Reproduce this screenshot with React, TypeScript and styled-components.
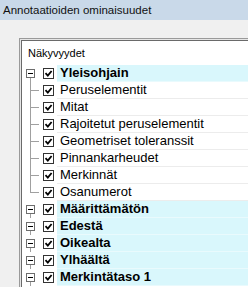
import styled, { createGlobalStyle } from "styled-components";

const GlobalStyle = createGlobalStyle`
  html, body {
    margin: 0;
    padding: 0;
    background: #f0f0f0;
    overflow: hidden;
  }
  body {
    font-family: "Liberation Sans", Arial, sans-serif;
    font-size: 11px;
    color: #000;
  }
`;

const Window = styled.div`
  width: 248px;
  height: 287px;
  overflow: hidden;
  background: #f0f0f0;
`;

const TitleBar = styled.div`
  height: 20px;
  background: #c9d9e9;
  display: flex;
  align-items: center;
  padding-left: 3px;
  font-size: 11.5px;
  color: #111;
`;

const Body = styled.div`
  padding: 18px 0 0 19px;
`;

const Panel = styled.div`
  width: 260px;
  border: 1px solid #9a9a9a;
  border-right: none;
  padding: 1px 0 0 1px;
  background: #e6e6e6;
`;

const PanelInner = styled.div`
  border-top: 1px solid #6a6a6a;
  border-left: 1px solid #6a6a6a;
  background: #fff;
  height: 260px;
`;

const Header = styled.div`
  height: 24px;
  display: flex;
  align-items: center;
  padding-left: 6px;
`;

const Row = styled.div`
  display: flex;
  height: 17px;
`;

const Tree = styled.svg`
  flex: 0 0 35px;
  display: block;
`;

const Label = styled.div<{ $group?: boolean }>`
  flex: 1;
  height: 16px;
  line-height: 16px;
  padding-left: 3px;
  font-size: 13px;
  border-bottom: 1px solid ${(p) => (p.$group ? "#e9fafd" : "#ececec")};
  background: ${(p) => (p.$group ? "#d9f7fc" : "#fff")};
  font-weight: ${(p) => (p.$group ? "bold" : "normal")};
  white-space: nowrap;
`;

type Kind = "parent" | "child" | "last" | "group";

const TreeCell = ({ kind }: { kind: Kind }) => (
  <Tree width="35" height="17" viewBox="0 0 35 17">
    {(kind === "parent" || kind === "group") && (
      <>
        <rect x="4.5" y="4.5" width="8" height="8" fill="#fff" stroke="#6d6d6d" />
        <line x1="6" y1="8.5" x2="11" y2="8.5" stroke="#000" />
        <line x1="8.5" y1="13" x2="8.5" y2="17" stroke="#a0a0a0" />
      </>
    )}
    {kind === "child" && (
      <line x1="8.5" y1="0" x2="8.5" y2="17" stroke="#a0a0a0" />
    )}
    {kind === "last" && (
      <line x1="8.5" y1="0" x2="8.5" y2="9" stroke="#a0a0a0" />
    )}
    {(kind === "child" || kind === "last") && (
      <line x1="8" y1="8.5" x2="17" y2="8.5" stroke="#a0a0a0" />
    )}
    <rect x="21.5" y="3.5" width="10" height="10" fill="#fff" stroke="#333" />
    <polyline
      points="23.5,8.2 25.8,10.6 29.6,6"
      fill="none"
      stroke="#000"
      strokeWidth="1.8"
    />
  </Tree>
);

const rows: { text: string; kind: Kind }[] = [
  { text: "Yleisohjain", kind: "parent" },
  { text: "Peruselementit", kind: "child" },
  { text: "Mitat", kind: "child" },
  { text: "Rajoitetut peruselementit", kind: "child" },
  { text: "Geometriset toleranssit", kind: "child" },
  { text: "Pinnankarheudet", kind: "child" },
  { text: "Merkinnät", kind: "child" },
  { text: "Osanumerot", kind: "last" },
  { text: "Määrittämätön", kind: "group" },
  { text: "Edestä", kind: "group" },
  { text: "Oikealta", kind: "group" },
  { text: "Ylhäältä", kind: "group" },
  { text: "Merkintätaso 1", kind: "group" },
];

export default function App() {
  return (
    <Window>
      <GlobalStyle />
      <TitleBar>Annotaatioiden ominaisuudet</TitleBar>
      <Body>
        <Panel>
          <PanelInner>
            <Header>Näkyvyydet</Header>
            {rows.map((r) => (
              <Row key={r.text}>
                <TreeCell kind={r.kind} />
                <Label $group={r.kind === "parent" || r.kind === "group"}>
                  {r.text}
                </Label>
              </Row>
            ))}
          </PanelInner>
        </Panel>
      </Body>
    </Window>
  );
}
